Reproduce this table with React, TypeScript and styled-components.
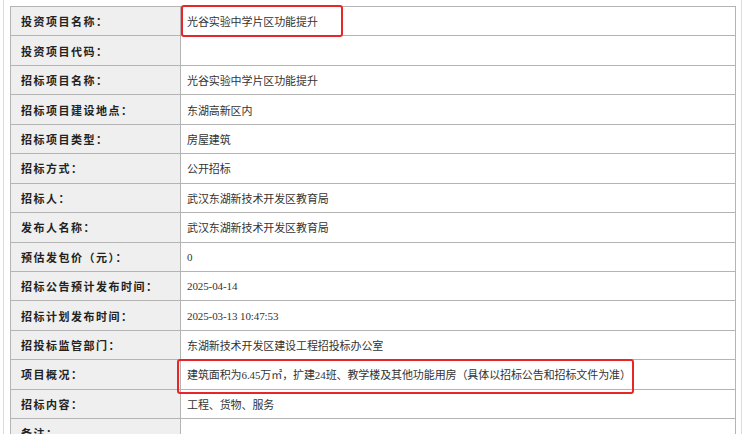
import React from "react";
import styled, { createGlobalStyle } from "styled-components";

const Global = createGlobalStyle`
  html, body { margin: 0; padding: 0; background: #fff; }
  body { font-family: "Liberation Serif", "Noto Sans CJK SC", serif; overflow: hidden; }
`;

const Frame = styled.div`
  margin-left: 3px;
  width: 739px;
  height: 434px;
  border-left: 1px solid #dcdcdc;
  border-right: 1px solid #dcdcdc;
  box-sizing: border-box;
  padding: 6px 0 0 6px;
  position: relative;
`;

const Table = styled.div`
  width: 726px;
  border: 1px solid #b4b4b4;
  border-bottom: none;
  box-sizing: border-box;
`;

const Row = styled.div`
  display: grid;
  grid-template-columns: 170px 1fr;
  height: 29.45px;
  border-bottom: 1px solid #b4b4b4;
  box-sizing: border-box;
`;

const Label = styled.div`
  background: #efefef;
  border-right: 1px solid #b4b4b4;
  display: flex;
  align-items: center;
  padding-left: 10px;
  font-family: "Noto Sans CJK SC", sans-serif;
  font-weight: 700;
  font-size: 11px;
  letter-spacing: 1.5px;
  color: #222;
  white-space: nowrap;
`;

const Value = styled.div`
  display: flex;
  align-items: center;
  padding-left: 6px;
  font-size: 11px;
  letter-spacing: -0.1px;
  color: #333;
  white-space: nowrap;
`;

const Mark = styled.div<{ $x: number; $y: number; $w: number; $h: number }>`
  position: absolute;
  left: ${(p) => p.$x}px;
  top: ${(p) => p.$y}px;
  width: ${(p) => p.$w}px;
  height: ${(p) => p.$h}px;
  border: 2px solid #e8262a;
  border-radius: 3px;
  box-sizing: border-box;
  pointer-events: none;
`;

const rows: [string, string][] = [
  ["投资项目名称：", "光谷实验中学片区功能提升"],
  ["投资项目代码：", ""],
  ["招标项目名称：", "光谷实验中学片区功能提升"],
  ["招标项目建设地点：", "东湖高新区内"],
  ["招标项目类型：", "房屋建筑"],
  ["招标方式：", "公开招标"],
  ["招标人：", "武汉东湖新技术开发区教育局"],
  ["发布人名称：", "武汉东湖新技术开发区教育局"],
  ["预估发包价（元）：", "0"],
  ["招标公告预计发布时间：", "2025-04-14"],
  ["招标计划发布时间：", "2025-03-13 10:47:53"],
  ["招投标监管部门：", "东湖新技术开发区建设工程招投标办公室"],
  ["项目概况：", "建筑面积为6.45万㎡，扩建24班、教学楼及其他功能用房（具体以招标公告和招标文件为准）"],
  ["招标内容：", "工程、货物、服务"],
  ["备注：", ""],
];

export default function App() {
  return (
    <>
      <Global />
      <Frame>
        <Table>
          {rows.map(([l, v]) => (
            <Row key={l}>
              <Label>{l}</Label>
              <Value>{v}</Value>
            </Row>
          ))}
        </Table>
        <Mark $x={177} $y={5} $w={162} $h={32} />
        <Mark $x={173} $y={359} $w={457} $h={35} />
      </Frame>
    </>
  );
}
